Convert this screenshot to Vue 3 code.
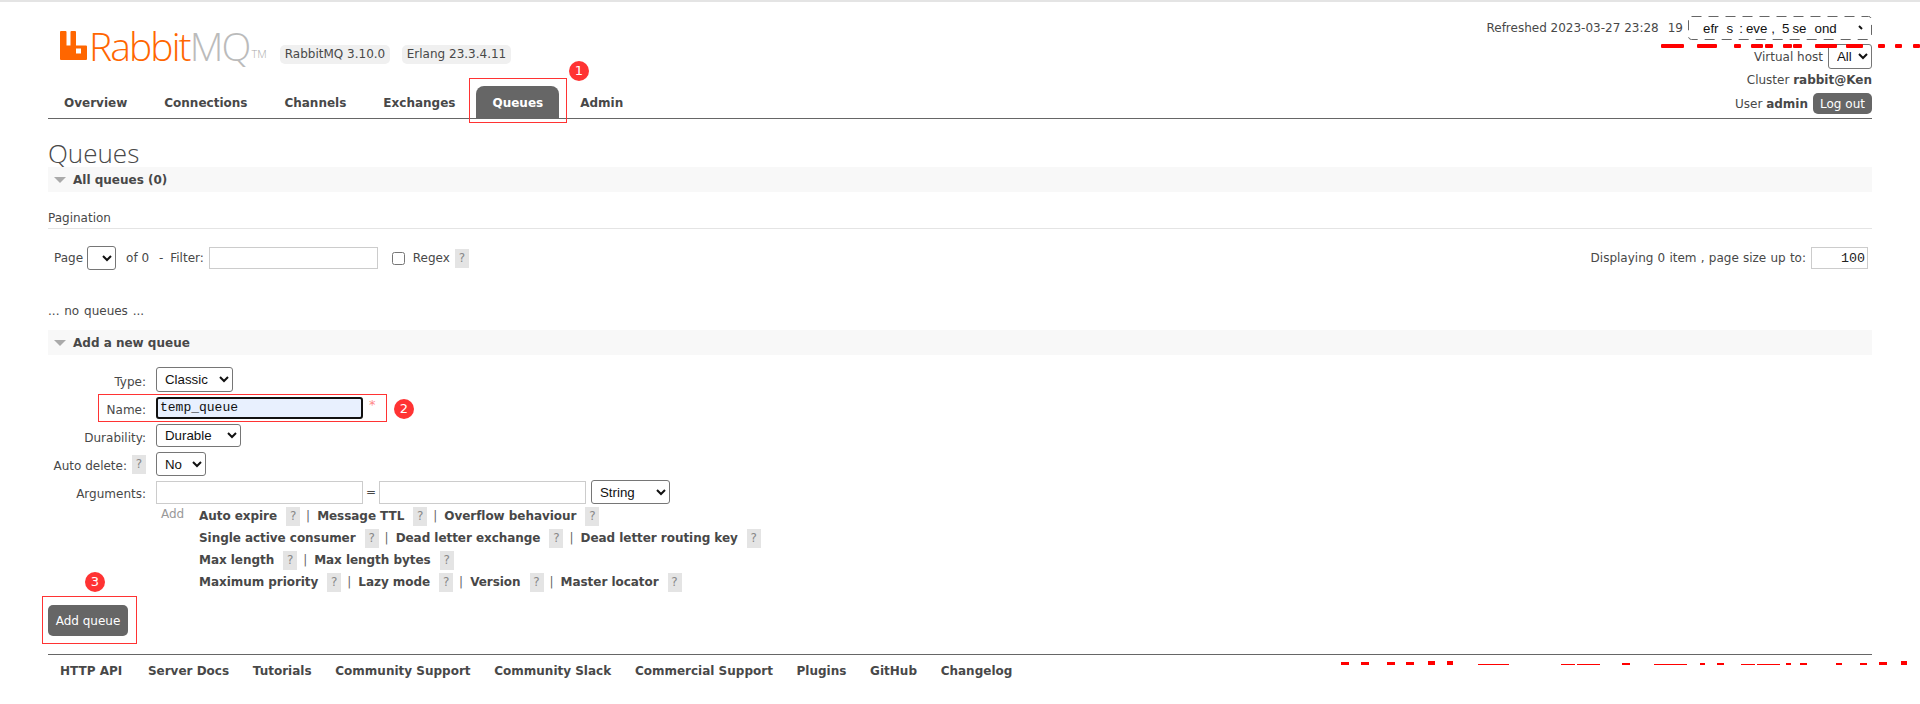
<script setup>
const tabs = ['Overview', 'Connections', 'Channels', 'Exchanges', 'Queues', 'Admin']
const footer = ['HTTP API', 'Server Docs', 'Tutorials', 'Community Support', 'Community Slack', 'Commercial Support', 'Plugins', 'GitHub', 'Changelog']
const argRows = [
  ['Auto expire', 'Message TTL', 'Overflow behaviour'],
  ['Single active consumer', 'Dead letter exchange', 'Dead letter routing key'],
  ['Max length', 'Max length bytes'],
  ['Maximum priority', 'Lazy mode', 'Version', 'Master locator']
]
const topDashes = [[1661,23],[1697,20],[1734,7],[1751,12],[1765,8],[1783,9],[1793,9],[1815,22],[1846,17],[1878,7],[1895,7],[1913,7]]
const bottomDashes = [[1341,8,3],[1361,8,3],[1387,8,3],[1406,8,3],[1428,7,4],[1447,6,4],[1478,31,1],[1561,14,1],[1577,23,1],[1622,8,2],[1654,33,1],[1700,5,2],[1717,7,2],[1741,14,1],[1757,23,1],[1786,5,2],[1800,7,2],[1836,6,2],[1860,7,2],[1879,8,3],[1901,6,4]]
const refreshBits = [['efr', 15], ['s', 8], [':', 6], ['eve', 3], [',', 4], ['5', 7], ['se', 3], ['ond', 8]]
</script>

<template>
  <div class="page">
    <header class="head">
      <div class="brand">
        <div class="logo">
          <svg class="logo-mark" width="27" height="29" viewBox="0 0 27 29">
            <path fill-rule="evenodd" fill="#f60" d="M1 0h4.5a1 1 0 0 1 1 1v13.5h4V1a1 1 0 0 1 1-1H15a1 1 0 0 1 1 1v13.5h10a1 1 0 0 1 1 1V28a1 1 0 0 1-1 1H1a1 1 0 0 1-1-1V1a1 1 0 0 1 1-1zM16 17.5v5h5v-5z"/>
          </svg>
          <span class="logo-rabbit">Rabbit</span><span class="logo-mq">MQ</span><span class="logo-tm">TM</span>
        </div>
        <span class="version first">RabbitMQ 3.10.0</span>
        <span class="version second">Erlang 23.3.4.11</span>
      </div>
      <div class="status">
        <div class="status-line refresh-line">
          <span class="refreshed">Refreshed 2023-03-27 23:28</span>
          <span class="seconds">19</span>
          <span class="refresh-box">
            <svg class="dash" width="184" height="24" viewBox="0 0 184 24">
              <rect x="0.5" y="0.5" width="183" height="23" rx="3" fill="none" stroke="#666" stroke-dasharray="10 7"/>
              <path d="M171 10l3 3" stroke="#111" stroke-width="2"/>
            </svg>
            <span v-for="b in refreshBits" :key="b[0]" class="bit" :style="{ marginLeft: b[1] + 'px' }">{{ b[0] }}</span>
          </span>
        </div>
        <div class="status-line vhost-line">Virtual host <select class="sel vhost"><option>All</option></select></div>
        <div class="status-line cluster-line">Cluster <b>rabbit@Ken</b></div>
        <div class="status-line user-line"><span>User <b>admin</b></span><button class="logout">Log out</button></div>
      </div>
    </header>

    <nav class="tabs">
      <a v-for="t in tabs" :key="t" class="tab" :class="{ active: t === 'Queues' }">{{ t }}</a>
    </nav>

    <h1 class="title">Queues</h1>
    <div class="section-bar"><i class="tri"></i>All queues (0)</div>

    <div class="pagination-label">Pagination</div>
    <div class="page-row">
      <div class="page-left">
        <span class="page-word">Page</span>
        <select class="sel page-sel"><option></option></select>
        <span class="of">of 0</span>
        <span class="filter">- Filter:</span>
        <input class="text filter-input" />
        <input class="check" type="checkbox" />
        <span class="regex">Regex</span>
        <span class="help">?</span>
      </div>
      <div class="page-right">
        <span class="displaying">Displaying 0 item , page size up to:</span>
        <input class="text size-input" value="100" />
      </div>
    </div>

    <p class="none">... no queues ...</p>
    <div class="section-bar add-bar"><i class="tri"></i>Add a new queue</div>

    <div class="form">
      <div class="row type-row">
        <label class="lab">Type:</label>
        <select class="sel type-sel"><option>Classic</option></select>
      </div>
      <div class="row name-row">
        <label class="lab">Name:</label>
        <input class="name-input" value="temp_queue" />
        <span class="req">*</span>
      </div>
      <div class="row dur-row">
        <label class="lab">Durability:</label>
        <select class="sel dur-sel"><option>Durable</option></select>
      </div>
      <div class="row auto-row">
        <label class="lab">Auto delete: <span class="help">?</span></label>
        <select class="sel no-sel"><option>No</option></select>
      </div>
      <div class="row arg-row">
        <label class="lab">Arguments:</label>
        <input class="text arg-input" />
        <span class="eq">=</span>
        <input class="text arg-input" />
        <select class="sel str-sel"><option>String</option></select>
      </div>
      <div class="adds">
        <span class="add-word">Add</span>
        <div class="add-list">
          <div v-for="(r, i) in argRows" :key="i" class="add-line">
            <template v-for="(a, j) in r" :key="a">
              <b>{{ a }}</b><span class="help">?</span><span v-if="j < r.length - 1" class="pipe">|</span>
            </template>
          </div>
        </div>
      </div>
    </div>

    <button class="add-queue">Add queue</button>

    <footer class="foot">
      <a v-for="f in footer" :key="f">{{ f }}</a>
    </footer>

    <div class="mark mark-1"></div><span class="dot dot-1">1</span>
    <div class="mark mark-2"></div><span class="dot dot-2">2</span>
    <div class="mark mark-3"></div><span class="dot dot-3">3</span>

    <svg class="scribble" width="1920" height="704" viewBox="0 0 1920 704">
      <rect v-for="d in topDashes" :key="d[0]" :x="d[0]" y="44" :width="d[1]" height="4" rx="1" fill="#f00"/>
      <rect v-for="d in bottomDashes" :key="d[0]" :x="d[0]" :y="665 - d[2]" :width="d[1]" :height="d[2]" fill="#f00"/>
    </svg>
  </div>
</template>

<style>
html, body { margin: 0; background: #fff; }
</style>

<style scoped>
.page {
  position: relative;
  width: 1920px;
  height: 704px;
  box-sizing: border-box;
  padding: 0 48px;
  overflow: hidden;
  border-top: 2px solid #e4e4e4;
  font: 12px "DejaVu Sans", Verdana, sans-serif;
  color: #484848;
}
.head { display: flex; justify-content: space-between; height: 84px; }
.brand { display: flex; align-items: flex-start; }
.logo { display: flex; align-items: flex-end; box-sizing: border-box; width: 216px; margin: 29px 0 0 12px; height: 29px; font-family: "Open Sans", sans-serif; font-weight: 300; font-size: 39px; line-height: 29px; }
.logo-mark { flex: none; margin-right: 2px; }
.logo-rabbit { color: #f60; letter-spacing: -1.9px; }
.logo-mq { color: #bbb; letter-spacing: -1.9px; }
.logo-tm { color: #aaa; font-size: 11px; line-height: 12px; margin-left: 2px; }
.version { box-sizing: border-box; background: #f0f0f0; border-radius: 5px; height: 19px; line-height: 19px; text-align: center; margin: 43px 0 0 12px; white-space: nowrap; }
.version.first { width: 110px; margin-left: 4px; }
.version.second { width: 109px; }
.status { display: flex; flex-direction: column; align-items: flex-end; }
.status-line { white-space: nowrap; }
.refresh-line { display: flex; align-items: center; margin-top: 14px; height: 24px; }
.seconds { margin-left: 9px; margin-right: 5px; }
.refresh-box { position: relative; box-sizing: border-box; display: flex; align-items: center; width: 184px; height: 24px; background: #fff; color: #111; font: 13.3px "Liberation Sans", Arial, sans-serif; }
.dash { position: absolute; left: 0; top: 0; }
.vhost-line { display: flex; align-items: center; margin-top: 4px; height: 25px; }
.cluster-line { margin-top: 2px; line-height: 18px; }
.user-line { display: flex; align-items: center; gap: 5px; margin-top: 4px; height: 21px; }
.sel { box-sizing: border-box; height: 24px; padding: 0 0 0 4px; border: 1px solid #767676; border-radius: 3px; background: #fff; color: #111; font: 13.3px "Liberation Sans", Arial, sans-serif; }
.vhost { width: 44px; height: 25px; margin-left: 5px; }
.logout { box-sizing: border-box; width: 59px; height: 21px; padding: 0; border: 0; border-radius: 5px; background: #666; color: #fff; font: 12px "DejaVu Sans", Verdana, sans-serif; }
.tabs { display: flex; gap: 5px; height: 32px; border-bottom: 1px solid #666; font-weight: bold; }
.tab { display: flex; align-items: center; box-sizing: border-box; height: 32px; padding: 2px 16px 0; border-radius: 8px 8px 0 0; color: #484848; white-space: nowrap; }
.active { background: #666; color: #fff; }
.title { margin: 20px 0 0; height: 28px; font: 300 26px/28px "Open Sans", sans-serif; color: #484848; }
.section-bar { display: flex; align-items: center; box-sizing: border-box; height: 25px; background: #f8f8f8; font-weight: bold; }
.tri { width: 0; height: 0; margin: 0 7px 0 6px; border-style: solid; border-width: 6px 6px 0; border-color: #aaa transparent transparent; }
.pagination-label { margin-top: 18px; height: 18px; line-height: 16px; border-bottom: 1px solid #e4e4e4; }
.page-row { display: flex; justify-content: space-between; margin-top: 17px; height: 24px; }
.page-left, .page-right { display: flex; align-items: center; }
.page-word { margin-left: 6px; }
.page-sel { width: 29px; margin-left: 4px; }
.of { margin-left: 10px; }
.filter { margin-left: 10px; word-spacing: 3px; }
.text { box-sizing: border-box; height: 22px; border: 1px solid #ccc; border-radius: 0; background: #fff; padding: 0 4px; }
.filter-input { width: 169px; margin-left: 5px; }
.check { width: 13px; height: 13px; margin: 0 0 0 14px; }
.regex { margin-left: 8px; }
.help { display: inline-block; box-sizing: border-box; width: 14px; height: 19px; line-height: 19px; text-align: center; background: #e4e4e4; color: #888; font-weight: normal; margin-left: 5px; }
.page-right { padding-right: 4px; }
.displaying { word-spacing: 0.4px; }
.size-input { width: 57px; margin-left: 5px; padding-right: 2px; text-align: right; font: 13.3px "Liberation Mono", monospace; color: #222; }
.none { margin: 32px 0 0; height: 18px; line-height: 18px; word-spacing: 1px; }
.add-bar { margin-top: 10px; }
.form { margin-top: 12px; }
.row { display: flex; align-items: center; }
.lab { display: flex; align-items: center; justify-content: flex-end; width: 98px; margin-right: 10px; padding-top: 4px; color: #484848; white-space: nowrap; }
.lab .help { margin-top: -4px; }
.type-row { height: 25px; }
.type-sel { width: 77px; height: 25px; }
.name-row { margin-top: 5px; height: 22px; }
.name-input { box-sizing: border-box; width: 207px; height: 22px; padding: 0 2px 2px; border: 2px solid #111; border-radius: 3px; background: #e8f0fe; outline: 0; font: 13px "Liberation Mono", monospace; color: #111; }
.req { margin-left: 6px; color: #f88; font-size: 13px; align-self: flex-start; margin-top: 0; }
.dur-row { margin-top: 5px; height: 23px; }
.dur-sel { width: 85px; height: 23px; }
.auto-row { margin-top: 5px; height: 24px; }
.no-sel { width: 50px; }
.arg-row { margin-top: 4px; height: 24px; }
.arg-input { width: 207px; height: 23px; }
.eq { width: 16px; text-align: center; }
.str-sel { width: 79px; margin-left: 5px; }
.adds { display: flex; margin: 1px 0 0 113px; }
.add-word { width: 38px; color: #999; padding-top: 2px; }
.add-line { display: flex; align-items: center; height: 22px; white-space: nowrap; }
.add-line b { letter-spacing: -0.05px; }
.add-line .help { margin-left: 9px; }
.pipe { margin-left: 6px; margin-right: 7px; color: #666; font-weight: normal; }
.add-queue { display: block; box-sizing: border-box; width: 80px; height: 31px; margin-top: 12px; border: 0; border-radius: 5px; background: #666; color: #fff; font: 12px "DejaVu Sans", Verdana, sans-serif; }
.foot { display: flex; gap: 23.7px; margin-top: 18px; padding: 7px 12px 0; border-top: 1px solid #666; font-weight: bold; line-height: 18px; white-space: nowrap; }
.foot a:first-child { margin-right: 2px; }
.mark { position: absolute; box-sizing: border-box; border: 1px solid #f33; }
.mark-1 { left: 469px; top: 76px; width: 98px; height: 45px; }
.mark-2 { left: 98px; top: 392px; width: 289px; height: 28px; }
.mark-3 { left: 42px; top: 594px; width: 95px; height: 48px; }
.dot { position: absolute; width: 20px; height: 20px; border-radius: 50%; background: #f33; color: #fff; font: 13px/20px "DejaVu Sans", sans-serif; text-align: center; }
.dot-1 { left: 569px; top: 59px; }
.dot-2 { left: 394px; top: 397px; }
.dot-3 { left: 85px; top: 570px; }
.scribble { position: absolute; left: 0; top: -2px; pointer-events: none; }
</style>
